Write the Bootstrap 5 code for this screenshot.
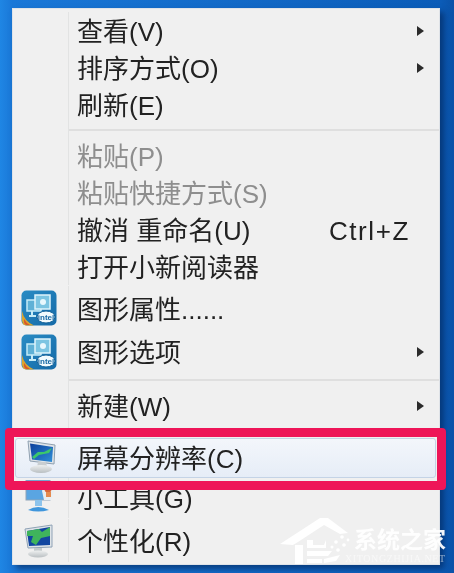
<!DOCTYPE html>
<html lang="zh-CN">
<head>
  <meta charset="UTF-8">
  <title>桌面右键菜单</title>
  <link href="https://cdn.jsdelivr.net/npm/bootstrap@5.3.2/dist/css/bootstrap.min.css" rel="stylesheet">
  <style>
    html, body { height: 100%; }
    body { margin: 0; background: #0b57b2; overflow: hidden; }
    .desk {
      width: 454px; height: 573px;
      background: linear-gradient(90deg, #1f86e4 0, #1a78d8 12px, #0b5cb8 440px, #0a52a8 100%);
      font-family: "Liberation Sans", "Noto Sans CJK SC", sans-serif;
    }
    .desk-soft { position: relative; width: 454px; height: 573px; padding: 8px 14px 8px 12px; filter: blur(.45px); }
    .ctx-menu {
      position: static; display: flex; flex-direction: column; width: 428px; height: 557px; min-width: 0;
      margin: 0; padding: 4px 0 0; border: 0; border-radius: 0;
      background: #f0f0f0;
      box-shadow: inset 0 0 0 1px #dfe3e8, 4px 4px 6px rgba(0, 25, 70, .55);
    }
    .ctx-item {
      display: flex; align-items: center; height: 37px; padding: 0; color: #222;
      font-size: 26px; line-height: 37px; white-space: nowrap;
    }
    .ctx-item:hover { background: transparent; color: #222; }
    .ctx-item.disabled { color: #8e8e8e; }
    .ctx-item.tall { height: 43px; line-height: 43px; }
    .ctx-item.first-tall { height: 44px; margin-top: 1px; }
    .ctx-item.sel { height: 40px; line-height: 40px; position: relative; }
    .ctx-item.gadget { height: 41px; line-height: 41px; }
    .ctx-item.last { margin-top: 1px; }
    .gut {
      flex: 0 0 57px; display: flex; align-items: center; align-self: stretch;
      padding-left: 9px; margin-right: 8px; border-right: 1px solid #e2e3e3;
    }
    .gut svg { display: block; flex: none; }
    .lbl { flex: 1 1 auto; padding-top: 4px; }
    .keys { margin-right: 30px; padding-top: 4px; letter-spacing: 1.6px; }
    .arr { width: 0; height: 0; margin-right: 16px; border-left: 7px solid #2b2b2b; border-top: 5.5px solid transparent; border-bottom: 5.5px solid transparent; }
    .sepgut { height: 14px; display: flex; }
    .sepgut.narrow { height: 13px; }
    .sepgut b { flex: 0 0 57px; border-right: 1px solid #e2e3e3; }
    .sepgut i { flex: 1; display: block; height: 2px; margin: 6px 1px 0 0; background: #dfdfdf; }
    .sel-bar {
      position: absolute; left: 15px; top: 438px; width: 421px; height: 40px;
      border: 1px solid #c4d3e6; border-radius: 3px;
      background: linear-gradient(180deg, #f3f6fb, #e6edf7);
    }
    .ctx-item.sel .gut { border-right-color: transparent; }
    .red-box {
      position: absolute; left: 5px; top: 428px; width: 441px; height: 62px;
      border: 9px solid #ee1558; border-radius: 4px;
    }
    .mark-logo { position: absolute; left: 280px; top: 518px; }
    .mark-txt {
      position: absolute; left: 354px; top: 528px; color: #fff; font-size: 23px; line-height: 24px;
      font-weight: 700; white-space: nowrap; opacity: .95;
    }
    .mark-sub {
      position: absolute; left: 345px; top: 553px; color: #fff; font-size: 10px; line-height: 12px;
      font-family: "Liberation Serif", serif; letter-spacing: .6px; white-space: nowrap; opacity: .55;
    }
  </style>
</head>
<body>

  <svg width="0" height="0" class="d-block position-absolute">
    <defs>
      <linearGradient id="intelBg" x1="0" y1="0" x2="1" y2="1"><stop offset="0" stop-color="#2a8cc4"/><stop offset="1" stop-color="#146aa8"/></linearGradient>
      <linearGradient id="screenBg" x1="0" y1="0" x2="1" y2="1"><stop offset="0" stop-color="#0d3f9c"/><stop offset="1" stop-color="#2f8fd8"/></linearGradient>
      <linearGradient id="baseBg" x1="0" y1="0" x2="0" y2="1"><stop offset="0" stop-color="#eef0f0"/><stop offset="1" stop-color="#b9bfc2"/></linearGradient>
      <symbol id="intelIco" viewBox="0 0 36 36">
        <rect x=".5" y=".5" width="35" height="35" rx="5" fill="url(#intelBg)"/>
        <path d="M1 21 Q3 31 13 35.5 H6 Q1 35.5 1 30Z" fill="#dba52d"/>
        <path d="M3 29 Q5 33 9 35 H6 Q3 35 3 31Z" fill="#d9562a"/>
        <rect x="6" y="10" width="14" height="11" fill="#5fb1d6" stroke="#c6ecf7" stroke-width="1.5"/>
        <rect x="14" y="5" width="15" height="14" fill="#7cc5e2" stroke="#def4fb" stroke-width="1.5"/>
        <circle cx="22" cy="12" r="3" fill="#e8f8fd"/>
        <path d="M11 21v4M8 26h7" stroke="#c6ecf7" stroke-width="2"/>
        <ellipse cx="25" cy="27" rx="9" ry="6" fill="#f1fafd" stroke="#0f5e96"/>
        <text x="25" y="30" text-anchor="middle" font-family="Liberation Sans, sans-serif" font-size="8" font-weight="700" fill="#1668a4">intel</text>
      </symbol>
    </defs>
  </svg>

  <div class="desk">
    <div class="desk-soft">
    <div class="sel-bar"></div>
    <div class="dropdown-menu show ctx-menu">
      <div class="dropdown-item ctx-item"><span class="gut"></span><span class="lbl">查看(V)</span><span class="arr"></span></div>
      <div class="dropdown-item ctx-item"><span class="gut"></span><span class="lbl">排序方式(O)</span><span class="arr"></span></div>
      <div class="dropdown-item ctx-item"><span class="gut"></span><span class="lbl">刷新(E)</span></div>
      <div class="sepgut"><b></b><i></i></div>
      <div class="dropdown-item ctx-item disabled"><span class="gut"></span><span class="lbl">粘贴(P)</span></div>
      <div class="dropdown-item ctx-item disabled"><span class="gut"></span><span class="lbl">粘贴快捷方式(S)</span></div>
      <div class="dropdown-item ctx-item"><span class="gut"></span><span class="lbl">撤消 重命名(U)</span><span class="keys">Ctrl+Z</span></div>
      <div class="dropdown-item ctx-item"><span class="gut"></span><span class="lbl">打开小新阅读器</span></div>
      <div class="dropdown-item ctx-item tall first-tall"><span class="gut"><svg width="36" height="36"><use href="#intelIco"/></svg></span><span class="lbl">图形属性......</span></div>
      <div class="dropdown-item ctx-item tall"><span class="gut"><svg width="36" height="36"><use href="#intelIco"/></svg></span><span class="lbl">图形选项</span><span class="arr"></span></div>
      <div class="sepgut"><b></b><i></i></div>
      <div class="dropdown-item ctx-item"><span class="gut"></span><span class="lbl">新建(W)</span><span class="arr"></span></div>
      <div class="sepgut narrow"><b></b><i></i></div>
      <div class="dropdown-item ctx-item sel"><span class="gut">
        <svg width="36" height="36" viewBox="0 0 36 36">
          <path d="M7 2 L34 6 L33 25 L9 22Z" fill="#dfe4e8" stroke="#8fa0b0"/>
          <path d="M9 4.5 L32 8 L31 23 L11 20.5Z" fill="url(#screenBg)"/>
          <path d="M11 18 L17 13 L23 13 L31 9 L28 14 L18 16 L13 20Z" fill="#3cc76c"/>
          <path d="M17 23h8l1 5h-10z" fill="#c9ced1"/>
          <ellipse cx="20" cy="30" rx="11" ry="4" fill="url(#baseBg)"/>
        </svg>
      </span><span class="lbl">屏幕分辨率(C)</span></div>
      <div class="dropdown-item ctx-item tall gadget"><span class="gut">
        <svg width="36" height="36" viewBox="0 0 36 36">
          <rect x="5" y="0" width="24" height="20" fill="#5aa5e2" stroke="#8fa4b8"/>
          <path d="M14 20h7v6h-7z" fill="#8cc3ec"/>
          <path d="M7 30 Q17 24 28 30 Q17 33 7 30Z" fill="#3f96dc"/>
          <path d="M24 2h6l3 10-3 8h-7l-2-9z" fill="#e9eef1"/>
          <circle cx="27" cy="9" r="3.5" fill="#d9673a"/>
          <path d="M25 12h5v5h-5z" fill="#e58b4f"/>
        </svg>
      </span><span class="lbl">小工具(G)</span></div>
      <div class="dropdown-item ctx-item tall last"><span class="gut">
        <svg width="36" height="36" viewBox="0 0 36 36">
          <path d="M4 6 L31 2 V24 L7 25Z" fill="#dfe4e8" stroke="#8fa2b6"/>
          <path d="M6 8 L29 4 V22 L8 23Z" fill="#1246a0"/>
          <path d="M6 8 L18 6 L21 9 L29 4 V13 L20 15 L15 22 L10 19 L12 13 L6 13Z" fill="#3fb45c"/>
          <path d="M13 25h8v4h-8z" fill="#c4cacd"/>
          <ellipse cx="17" cy="31" rx="10" ry="3.5" fill="url(#baseBg)"/>
        </svg>
      </span><span class="lbl">个性化(R)</span></div>
    </div>

    <div class="red-box"></div>

    <svg class="mark-logo" width="72" height="47" viewBox="0 0 72 47" fill="#fff">
      <path d="M0 26 L40 0 L48 0 L68 15 L60 16 L44 7 L18 24 L13 27Z"/>
      <path d="M15 27 H23 V46 H15Z"/>
      <path d="M27 22 H33 V27 H44 L46 22 V30 H27Z M27 33 H52 L48 38 H27Z M27 41 H42 V45 H27Z"/>
      <path d="M44 41 L60 37 L56 43 L44 45Z"/>
      <circle cx="56" cy="24" r="1.8"/><circle cx="62" cy="19" r="1.8"/><circle cx="64" cy="27" r="1.8"/><circle cx="58" cy="32" r="1.8"/><circle cx="68" cy="22" r="1.4"/><circle cx="52" cy="29" r="1.5"/>
    </svg>
    <div class="mark-txt">系统之家</div>
    <div class="mark-sub">XITONGZHIJIA.NET</div>
    </div>
  </div>

  <script src="https://cdn.jsdelivr.net/npm/bootstrap@5.3.2/dist/js/bootstrap.bundle.min.js"></script>
</body>
</html>
